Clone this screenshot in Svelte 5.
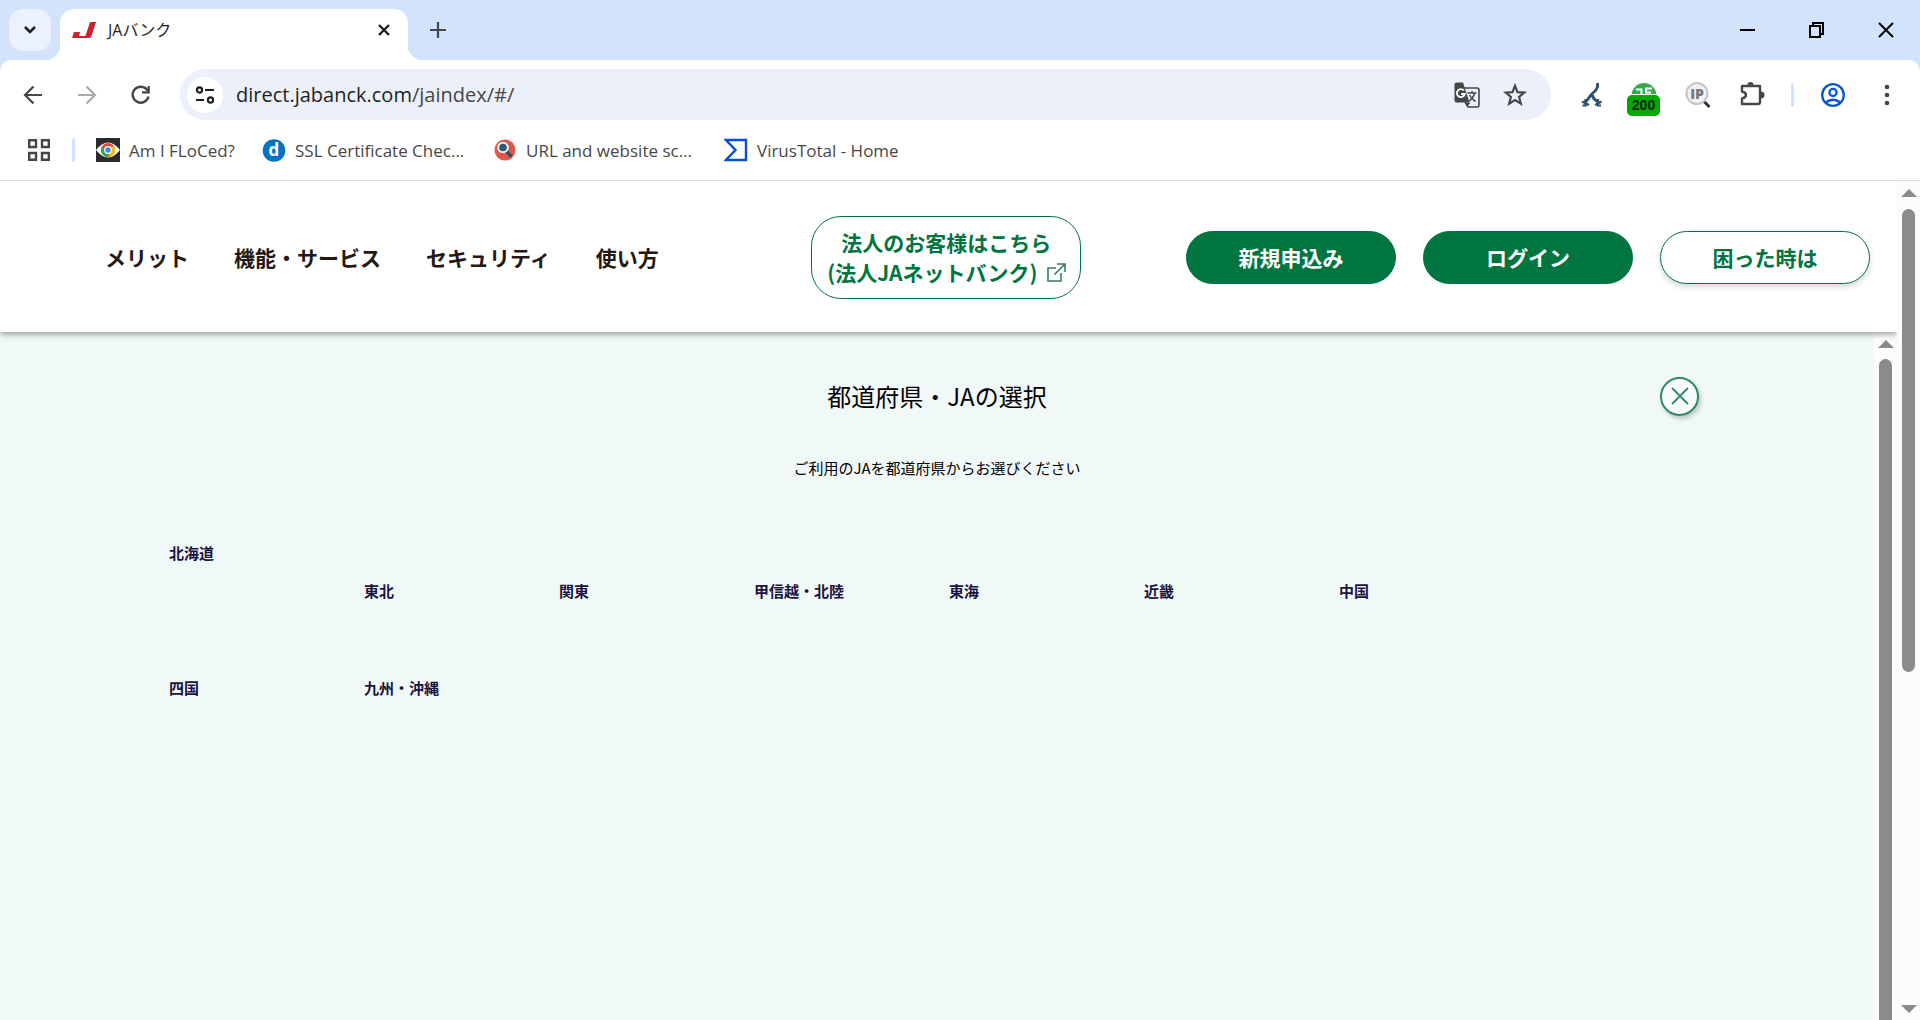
<script>
  const bookmarks = [
    { label: 'Am I FLoCed?', icon: 'eye' },
    { label: 'SSL Certificate Chec...', icon: 'd' },
    { label: 'URL and website sc...', icon: 'scan' },
    { label: 'VirusTotal - Home', icon: 'vt' }
  ];
  const nav = ['メリット', '機能・サービス', 'セキュリティ', '使い方'];
  const regions = ['北海道', '東北', '関東', '甲信越・北陸', '東海', '近畿', '中国', '四国', '九州・沖縄'];
</script>

<div class="window">
  <header class="strip">
    <button class="search-tabs" aria-label="Search tabs">
      <svg width="14" height="10" viewBox="0 0 14 10"><path d="M2 2l5 5 5-5" fill="none" stroke="#1f1f1f" stroke-width="2.6" /></svg>
    </button>
    <div class="tab">
      <svg width="24" height="16" viewBox="0 0 24 16"><path d="M18 0h6l-4.500 14q-.5 2-2.500 2H0l2-6h6l-1 4h5.500q1 0 1.300-1z" fill="#cf202f" /></svg>
      <span class="tab-title">JAバンク</span>
      <button class="bare" aria-label="Close tab">
        <svg width="14" height="14" viewBox="0 0 14 14"><path d="M2 2l10 10M12 2L2 12" stroke="#1f1f1f" stroke-width="2.4" /></svg>
      </button>
    </div>
    <button class="bare plus" aria-label="New tab">
      <svg width="16" height="16" viewBox="0 0 16 16"><path d="M8 0v16M0 8h16" stroke="#444746" stroke-width="2.2" /></svg>
    </button>
    <div class="controls">
      <button class="bare" aria-label="Minimize"><svg width="16" height="16" viewBox="0 0 16 16"><path d="M0 8h15" stroke="#000" stroke-width="2" /></svg></button>
      <button class="bare" aria-label="Restore"><svg width="16" height="16" viewBox="0 0 16 16"><path d="M1 4h10v11H1zM4 4V1h10v11h-3" fill="none" stroke="#000" stroke-width="2" /></svg></button>
      <button class="bare" aria-label="Close"><svg width="16" height="16" viewBox="0 0 16 16"><path d="M1 1l14 14M15 1L1 15" stroke="#000" stroke-width="2" /></svg></button>
    </div>
  </header>

  <div class="toolbar-bg">
    <div class="toolbar">
      <div class="history">
        <button class="bare" aria-label="Back"><svg width="20" height="20" viewBox="0 0 20 20"><path d="M19 10H3M10.500 1.500L2 10l8.500 8.500" fill="none" stroke="#444746" stroke-width="2.200" /></svg></button>
        <button class="bare" aria-label="Forward"><svg width="20" height="20" viewBox="0 0 20 20"><path d="M1 10h16M9.500 1.500L18 10l-8.500 8.500" fill="none" stroke="#aaacac" stroke-width="2.200" /></svg></button>
        <button class="bare" aria-label="Reload"><svg width="20" height="20" viewBox="0 0 20 20"><path d="M17.500 11.500A8 8 0 1 1 15.800 4.500L17 6" fill="none" stroke="#444746" stroke-width="2.400" /><path d="M18.800 1v7.500H11V6.200h5.500V1z" fill="#444746" /></svg></button>
      </div>
      <div class="omnibox">
        <button class="site" aria-label="Site information">
          <svg width="20" height="18" viewBox="0 0 20 18"><g fill="none" stroke="#1f1f1f" stroke-width="2.200"><circle cx="4.500" cy="4" r="2.600" /><path d="M10 4h9M1 14h8" /><circle cx="15.500" cy="14" r="2.600" /></g></svg>
        </button>
        <div class="url" role="textbox" aria-label="Address" tabindex="0"><span>direct.jabanck.com</span>/jaindex/#/</div>
        <button class="bare" aria-label="Translate">
          <svg width="26" height="26" viewBox="0 0 26 26">
            <path d="M10 6h13q2 0 2 2v15q0 2-2 2h-9l-3-5" fill="none" stroke="#444746" stroke-width="1.600" />
            <path d="M2.500 0.500H9l6.500 20h-13q-2 0-2-2v-16q0-2 2-2z" fill="#444746" />
            <path d="M11.500 20.500h5l-3 4z" fill="#444746" />
            <path d="M10 8.500a4 4 0 1 0 .8 3.500H7.200" fill="none" stroke="#fff" stroke-width="1.800" />
            <path d="M13.500 11h9M18 9v2M20.500 11q-1 5-5.500 8M15.500 13q2 4 6 6.500" fill="none" stroke="#444746" stroke-width="1.500" />
          </svg>
        </button>
        <button class="bare" aria-label="Bookmark this page">
          <svg width="24" height="24" viewBox="0 0 24 24"><path d="M12 2.800l2.500 6.300 6.800.5-5.200 4.400 1.700 6.600L12 17l-5.800 3.600L7.900 14 2.700 9.600l6.800-.5z" fill="none" stroke="#444746" stroke-width="2.200" /></svg>
        </button>
      </div>
      <div class="extensions">
        <button class="bare" aria-label="Redirect path">
          <svg width="22" height="26" viewBox="0 0 22 26"><path d="M16.500 1q1 5-3.500 9-3 2.500-4.500 5T4.500 20M11.500 13q.5 4.500 6 7" fill="none" stroke="#2d5167" stroke-width="2.800" /><path d="M1 19.500l7 3.500M4.500 17v6.500H1.500M20.500 19.500L14 23M17 17v6.500h3" fill="none" stroke="#2d5167" stroke-width="2.200" /></svg>
        </button>
        <button class="bare status" aria-label="Status 200">
          <svg width="26" height="26" viewBox="0 0 26 26"><circle cx="13" cy="13.500" r="12.500" fill="#34a853" /><path d="M5 7.500h5.500V13M21 6.500h-6v4h5" fill="none" stroke="#fff" stroke-width="2" /></svg>
          <span class="badge">200</span>
        </button>
        <button class="bare" aria-label="IP lookup">
          <svg width="26" height="26" viewBox="0 0 26 26"><circle cx="12" cy="11.500" r="10.500" fill="#f1f1f3" stroke="#c6c6ca" stroke-width="2" /><path d="M19.500 20l5 5" stroke="#333" stroke-width="3" /><text x="12" y="17" text-anchor="middle" class="ip">IP</text></svg>
        </button>
        <button class="bare" aria-label="Extensions">
          <svg width="26" height="26" viewBox="0 0 26 26"><path d="M3 4h18v8.500V20q0 2-2 2H3v-5.500q4-1 4-3.500T3 9.500z" fill="none" stroke="#444746" stroke-width="2.400" stroke-linejoin="round" /><path d="M8.500 3a3 3 0 0 1 6 0zM22 9.500a3.300 3.300 0 0 1 0 7z" fill="#444746" /></svg>
        </button>
        <span class="rule"></span>
        <button class="bare" aria-label="Profile">
          <svg width="26" height="26" viewBox="0 0 26 26"><g fill="none" stroke="#0b57d0" stroke-width="2.300"><circle cx="13" cy="13" r="10.800" /><circle cx="13" cy="10.500" r="3.600" /><path d="M5.500 20.500q7.500-5.500 15 0" /></g></svg>
        </button>
        <button class="bare menu" aria-label="Menu">
          <svg width="6" height="22" viewBox="0 0 6 22"><g fill="#444746"><circle cx="3" cy="3" r="2.300" /><circle cx="3" cy="11" r="2.300" /><circle cx="3" cy="19" r="2.300" /></g></svg>
        </button>
      </div>
    </div>
    <nav class="bookmarks" aria-label="Bookmarks">
      <button class="bare" aria-label="Apps"><svg width="22" height="22" viewBox="0 0 22 22"><path d="M1.200 1.200h6.800v6.800h-6.800zM14 1.200h6.800v6.800H14zM1.200 14h6.800v6.800h-6.800zM14 14h6.800v6.800H14z" fill="none" stroke="#444746" stroke-width="2.400" /></svg></button>
      <span class="rule"></span>
      {#each bookmarks as b}
        <a href="#bookmark" class={b.icon}>
          <svg width="24" height="24" viewBox="0 0 24 24">
            {#if b.icon === 'eye'}
              <rect width="24" height="24" fill="#2b2b2b" />
              <path d="M0 12q12-15 24 0-12 15-24 0z" fill="#fff" />
              <circle cx="12" cy="12" r="7" fill="#ea4335" />
              <path d="M5.900 8.500A7 7 0 0 0 12 19l3.500-5.500L12 12z" fill="#34a853" />
              <path d="M18.100 8.500A7 7 0 0 1 12 19l3-5.500-1-5z" fill="#fbbc04" />
              <circle cx="12" cy="12" r="3.300" fill="#4285f4" stroke="#fff" stroke-width="1.200" />
            {:else if b.icon === 'd'}
              <circle cx="12" cy="12.500" r="11.300" fill="#0274c3" />
              <text x="12" y="18" text-anchor="middle" class="dletter">d</text>
            {:else if b.icon === 'scan'}
              <circle cx="12" cy="12" r="10.500" fill="#e2574c" />
              <path d="M13.500 13.500l5 5" stroke="#324a5e" stroke-width="3.200" />
              <circle cx="10" cy="9.500" r="4.800" fill="#2b5a80" stroke="#f1f1f1" stroke-width="2" />
            {:else}
              <path d="M2 2h20v20H2l9.500-10z" fill="none" stroke="#0b4dda" stroke-width="2.400" />
            {/if}
          </svg>
          <span>{b.label}</span>
        </a>
      {/each}
    </nav>
  </div>

  <div class="viewport">
    <div class="page">
      <header class="site-header">
        <nav class="main-nav">
          {#each nav as item}<a href="#nav">{item}</a>{/each}
        </nav>
        <a class="corporate" href="#corporate">
          <span>法人のお客様はこちら</span>
          <span class="line">(法人JAネットバンク)
            <svg width="19" height="19" viewBox="0 0 19 19"><path d="M9 5H1v13h13v-8M7.500 11.500L18 1M10 1h8v8" fill="none" stroke="#2f8159" stroke-width="1.600" /></svg>
          </span>
        </a>
        <div class="actions">
          <a class="pill" href="#apply">新規申込み</a>
          <a class="pill" href="#login">ログイン</a>
          <a class="pill outline" href="#help">困った時は</a>
        </div>
      </header>
      <div class="panel-row">
        <main>
          <div class="title-row">
            <h1>都道府県・JAの選択</h1>
            <button class="close" aria-label="閉じる">
              <svg width="18" height="18" viewBox="0 0 18 18"><path d="M1 1l16 16M17 1L1 17" stroke="#308a63" stroke-width="1.800" /></svg>
            </button>
          </div>
          <p>ご利用のJAを都道府県からお選びください</p>
          <ul class="regions">
            {#each regions as r, i}
              <li class:lowered={i > 0 && i < 7}>{r}</li>
            {/each}
          </ul>
        </main>
        <div class="bar inner" aria-hidden="true">
          <span class="arrow up"></span>
          <span class="thumb"></span>
        </div>
      </div>
    </div>
    <div class="bar" aria-hidden="true">
      <span class="arrow up"></span>
      <span class="track"><span class="thumb"></span></span>
      <span class="arrow down"></span>
    </div>
  </div>
</div>

<style>
  :global(body) { margin: 0; }
  * { box-sizing: border-box; }
  a { color: inherit; text-decoration: none; }
  svg { display: block; flex: none; }
  .bare { display: flex; padding: 0; border: 0; background: none; }

  .window {
    display: flex;
    flex-direction: column;
    min-height: 100vh;
    background: #d3e3fd;
    font-family: "Open Sans", "Noto Sans CJK JP", sans-serif;
  }

  .strip { display: flex; align-items: center; height: 60px; padding: 0 10px 0 9px; }
  .search-tabs {
    display: flex;
    align-items: center;
    justify-content: center;
    width: 42px;
    height: 42px;
    padding: 0;
    border: 0;
    border-radius: 14px;
    background: #ebf1fd;
  }
  .tab {
    position: relative;
    display: flex;
    align-items: center;
    align-self: flex-end;
    gap: 12px;
    width: 348px;
    height: 51px;
    margin-left: 9px;
    padding: 0 17px 9px 12px;
    border-radius: 14px 14px 0 0;
    background: #fff;
  }
  .tab::before, .tab::after {
    content: "";
    position: absolute;
    bottom: 0;
    width: 14px;
    height: 14px;
  }
  .tab::before { left: -14px; background: radial-gradient(circle at 0 0, transparent 14px, #fff 14px); }
  .tab::after { right: -14px; background: radial-gradient(circle at 100% 0, transparent 14px, #fff 14px); }
  .tab-title { flex: 1; color: #1f1f1f; font-size: 16px; line-height: 24px; }
  .plus { margin-left: 22px; }
  .controls { display: flex; gap: 53px; margin-left: auto; padding-right: 16px; }

  .toolbar-bg { border-radius: 12px 12px 0 0; border-bottom: 1px solid #dcdddf; background: #fff; }
  .toolbar { display: flex; align-items: center; padding: 9px 30px 0 23px; }
  .history { display: flex; gap: 34px; width: 157px; }
  .omnibox {
    display: flex;
    flex: 1;
    align-items: center;
    gap: 23px;
    height: 51px;
    padding: 0 24px 0 7px;
    border-radius: 26px;
    background: #ebf0fa;
  }
  .site {
    display: flex;
    align-items: center;
    justify-content: center;
    width: 36px;
    height: 36px;
    padding: 0;
    border: 0;
    border-radius: 50%;
    background: #fff;
  }
  .url { flex: 1; margin-left: -10px; color: #474747; font-size: 20px; line-height: 28px; }
  .url span { color: #1f1f1f; }
  .extensions { display: flex; align-items: center; gap: 28px; margin-left: 30px; }
  .rule { width: 3px; height: 24px; border-radius: 2px; background: #d3e3fd; }
  .extensions .rule { margin: 0 -2px; }
  .menu { margin-left: 10px; }
  .status { position: relative; }
  .badge {
    position: absolute;
    top: 13px;
    left: -4px;
    width: 33px;
    height: 21px;
    border-radius: 5px;
    background: #00a800;
    box-shadow: 0 0 0 1px #fff;
    color: #102010;
    font-size: 14px;
    font-weight: 600;
    line-height: 20px;
    text-align: center;
  }
  .ip { fill: #77777b; font: 800 14px "Open Sans", sans-serif; }
  .dletter { fill: #fff; font: 700 17px "Open Sans", sans-serif; }

  .bookmarks { display: flex; align-items: center; height: 60px; padding-left: 28px; color: #474747; font-size: 17px; }
  .bookmarks .rule { margin: 0 21px 0 22px; }
  .bookmarks a { display: flex; align-items: center; gap: 9px; min-width: 231px; white-space: nowrap; }
  .bookmarks .eye { min-width: 166px; }

  .viewport { display: flex; flex: 1; background: #fff; font-family: "Noto Sans CJK JP", sans-serif; }
  .page { display: flex; flex: 1; flex-direction: column; }
  .site-header {
    position: relative;
    display: flex;
    align-items: center;
    justify-content: space-between;
    padding: 35px 27px 33px 105px;
    background: #fff;
    box-shadow: 0 2px 6px rgba(40, 60, 50, 0.5);
    clip-path: inset(0 0 -12px 0);
    font-size: 21px;
    font-weight: 700;
    line-height: 30px;
    white-space: nowrap;
  }
  .main-nav { display: flex; gap: 45px; padding-bottom: 1px; color: #231815; }
  .corporate {
    display: flex;
    flex-direction: column;
    align-items: center;
    margin-left: 47px;
    padding: 10px 14px 11px 15px;
    border: 1px solid #00753f;
    border-radius: 30px;
    color: #00753f;
  }
  .line { display: flex; align-items: center; gap: 9px; }
  .actions { display: flex; gap: 27px; }
  .pill {
    width: 210px;
    padding: 10px 0 11px;
    border: 1px solid #00753f;
    border-radius: 27px;
    background: #00753f;
    color: #fff;
    text-align: center;
  }
  .outline { background: #fff; color: #00753f; box-shadow: 0 3px 6px rgba(0, 0, 0, 0.16); }

  .panel-row { display: flex; flex: 1; }
  main { flex: 1; padding-top: 44px; background: #f1f8f8; color: #000; }
  .title-row { display: grid; grid-template-columns: 1fr auto 1fr; align-items: center; padding: 0 175px; }
  h1 { grid-column: 2; margin: 0; padding-bottom: 1px; font-size: 24px; font-weight: 400; line-height: 39px; }
  .close {
    display: flex;
    align-items: center;
    justify-content: center;
    justify-self: end;
    width: 39px;
    height: 39px;
    padding: 0;
    border: 2px solid #308a63;
    border-radius: 50%;
    background: #f7fbfa;
    box-shadow: 2px 3px 4px rgba(0, 0, 0, 0.2);
  }
  p { margin: 41px 0 0; font-size: 15px; line-height: 22px; text-align: center; }
  .regions {
    display: grid;
    grid-template-columns: repeat(7, 1fr);
    row-gap: 75px;
    margin: 63px 0 0;
    padding: 0 340px 0 169px;
    list-style: none;
    color: #1b1340;
    font-size: 15px;
    font-weight: 700;
    line-height: 22px;
    white-space: nowrap;
  }
  .lowered { padding-top: 38px; }

  .bar { display: flex; flex-direction: column; align-items: center; width: 23px; padding: 8px 0 7px; background: #fcfcfc; }
  .inner { padding-bottom: 0; }
  .arrow { border: 8px solid transparent; border-top: 0; border-bottom: 8px solid #8b8b8b; }
  .down { border-top: 8px solid #8b8b8b; border-bottom: 0; }
  .thumb { display: block; width: 13px; border-radius: 7px; background: #8b8b8b; }
  .track { flex: 1; padding: 12px 0; display: flex; }
  .track .thumb { height: 59%; }
  .inner .thumb { flex: 1; margin-top: 11px; border-radius: 7px 7px 0 0; }
</style>
